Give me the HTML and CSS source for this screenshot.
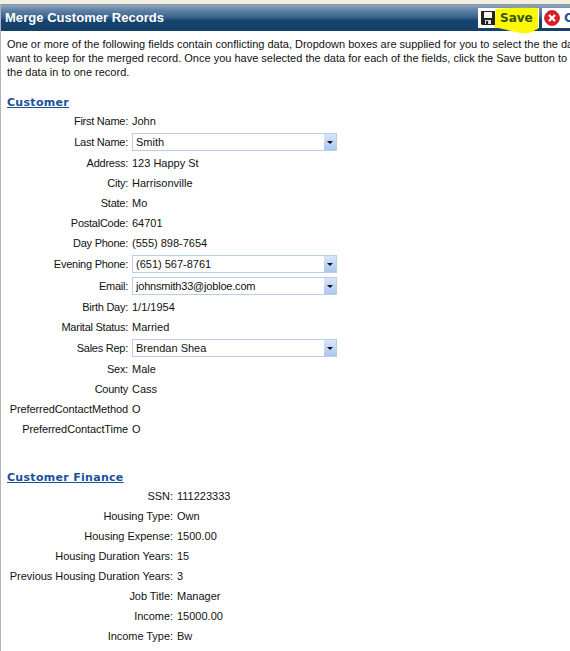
FILE: index.html
```html
<!DOCTYPE html>
<html lang="en">
<head>
<meta charset="utf-8">
<title>Merge Customer Records</title>
<link rel="stylesheet" href="styles.css">
</head>
<body>
<div class="panel">
  <header class="bar">
    <h1>Merge Customer Records</h1>
    <div class="actions">
      <button class="btn save">
        <svg class="mark" width="47" height="29" viewBox="0 0 47 29"><path d="M3 3Q20 1 45 2L45 23L42 24Q38 28 27 27L14 24L1 21Z" fill="#fcf800"/></svg>
        <svg class="icon" width="14" height="14" viewBox="0 0 14 14"><path d="M0 0H14V14H1L0 13Z" fill="#222"/><path d="M3 1H11V7H3Z" fill="#f4f4ee"/><path d="M4 9H10V13H4Z" fill="#ddd"/><path d="M5 10H7V13H5Z" fill="#222"/></svg>
        <span>Save</span>
      </button>
      <button class="btn cancel">
        <svg class="icon" width="16" height="16" viewBox="0 0 16 16"><circle cx="8" cy="8" r="7.4" fill="#dc1e22" stroke="#b8282a"/><path d="M5 5L11 11M11 5L5 11" stroke="#fff" stroke-width="2.4"/></svg>
        <span>Cancel</span>
      </button>
    </div>
  </header>
  <main>
    <p class="intro"><span class="l1">One or more of the following fields contain conflicting data, Dropdown boxes are supplied for you to select the the data you</span><br><span class="l2">want to keep for the merged record. Once you have selected the data for each of the fields, click the Save button to merge</span><br><span class="l3">the data in to one record.</span></p>
    <h2>Customer</h2>
    <dl class="customer">
      <dt>First Name:</dt><dd>John</dd>
      <dt>Last Name:</dt><dd class="pick"><div class="select">Smith<i></i></div></dd>
      <dt>Address:</dt><dd>123 Happy St</dd>
      <dt>City:</dt><dd>Harrisonville</dd>
      <dt>State:</dt><dd>Mo</dd>
      <dt>PostalCode:</dt><dd>64701</dd>
      <dt>Day Phone:</dt><dd>(555) 898-7654</dd>
      <dt>Evening Phone:</dt><dd class="pick"><div class="select">(651) 567-8761<i></i></div></dd>
      <dt>Email:</dt><dd class="pick"><div class="select email">johnsmith33@jobloe.com<i></i></div></dd>
      <dt>Birth Day:</dt><dd>1/1/1954</dd>
      <dt>Marital Status:</dt><dd>Married</dd>
      <dt>Sales Rep:</dt><dd class="pick"><div class="select">Brendan Shea<i></i></div></dd>
      <dt>Sex:</dt><dd>Male</dd>
      <dt>County</dt><dd>Cass</dd>
      <dt class="long">PreferredContactMethod</dt><dd>O</dd>
      <dt class="long">PreferredContactTime</dt><dd>O</dd>
    </dl>
    <h2>Customer Finance</h2>
    <dl class="finance">
      <dt>SSN:</dt><dd>111223333</dd>
      <dt>Housing Type:</dt><dd>Own</dd>
      <dt>Housing Expense:</dt><dd>1500.00</dd>
      <dt>Housing Duration Years:</dt><dd>15</dd>
      <dt>Previous Housing Duration Years:</dt><dd>3</dd>
      <dt>Job Title:</dt><dd>Manager</dd>
      <dt>Income:</dt><dd>15000.00</dd>
      <dt>Income Type:</dt><dd>Bw</dd>
    </dl>
  </main>
</div>
</body>
</html>
```
FILE: styles.css
```css
* { box-sizing: border-box; }
body {
  margin: 0;
  padding-top: 4px;
  height: 651px;
  overflow: hidden;
  background: #f1efdf;
  color: #111;
  font: 11px/14px "Liberation Sans", Arial, sans-serif;
}
.panel {
  height: 647px;
  background: #fff;
  border-left: 1px solid #b4b4b8;
  border-top: 1px solid #8e979f;
  overflow: hidden;
}
.bar {
  display: flex;
  justify-content: space-between;
  height: 26px;
  background: linear-gradient(#8ea5bd 0, #5d7fa3 22%, #3c6690 45%, #16436f 60%, #164069 100%);
}
h1 {
  margin: 0;
  padding-left: 4px;
  color: #fff;
  font: bold 13px/25px "Liberation Sans", Arial, sans-serif;
  letter-spacing: 0.04px;
  white-space: nowrap;
}
.actions { display: flex; gap: 3px; width: 92px; padding-top: 3px; }
.btn {
  position: relative;
  display: flex;
  flex: none;
  align-items: center;
  height: 20px;
  padding: 0 0 0 3px;
  border: 0;
  background: #fff;
  color: #24549b;
  font: bold 12px/20px "DejaVu Sans", Verdana, sans-serif;
}
.save { width: 61px; color: #31511a; }
.save span, .save .icon { position: relative; }
.save .icon { margin-right: 5px; }
.cancel { width: 75px; padding-left: 2px; }
.cancel .icon { margin-right: 4px; }
.mark { position: absolute; left: 15px; top: -2px; }
main { padding: 6px 0 0 6px; }
.intro { margin: 0; height: 59px; white-space: nowrap; }
h2 {
  margin: 0;
  height: 15px;
  color: #1b509b;
  font: bold 11px/14px "DejaVu Sans", Verdana, sans-serif;
  letter-spacing: 0.3px;
  text-decoration: underline;
}
dl {
  display: grid;
  grid-template-columns: 121px 1fr;
  column-gap: 4px;
  margin: 0;
  line-height: 20px;
  align-items: center;
  white-space: nowrap;
}
dt { text-align: right; letter-spacing: -0.25px; }
dt.long { letter-spacing: -0.1px; }
dd { margin: 0; }
.customer { margin-bottom: 32px; }
.finance { grid-template-columns: 166px 1fr; }
.finance dt { letter-spacing: -0.04px; }
.pick { height: 22px; padding-top: 2px; }
.select {
  display: flex;
  justify-content: space-between;
  width: 205px;
  height: 18px;
  padding-left: 3px;
  border: 1px solid #b8cfe6;
  line-height: 17px;
}
.select.email { letter-spacing: -0.2px; }
.select i {
  display: flex;
  align-items: center;
  justify-content: center;
  width: 12px;
  height: 16px;
  background: linear-gradient(#d8e6fa, #abc6ee);
}
.select i::after {
  content: "";
  border: 3px solid transparent;
  border-top-color: #111;
  border-bottom: 0;
}
```
